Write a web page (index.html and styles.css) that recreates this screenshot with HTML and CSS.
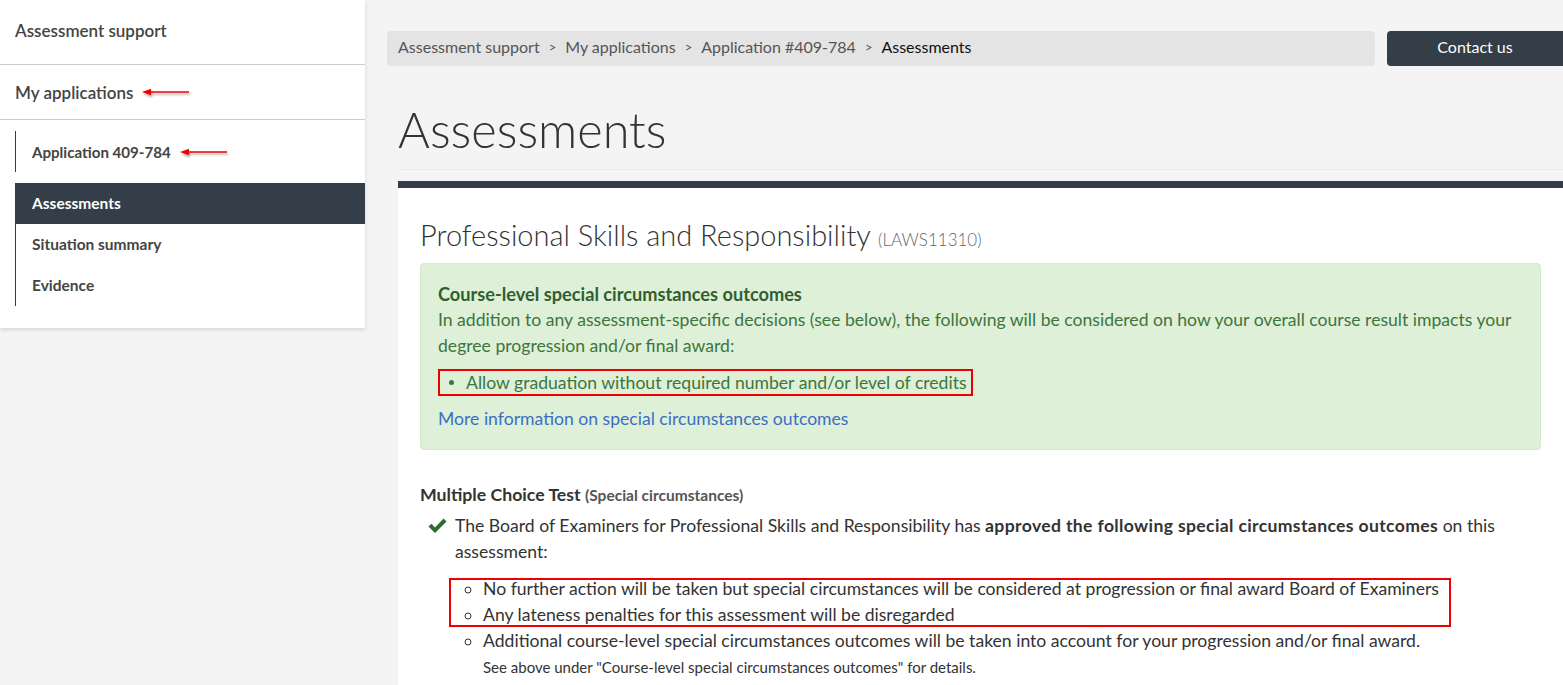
FILE: index.html
```html
<!DOCTYPE html>
<html lang="en">
<head>
<meta charset="utf-8">
<title>Assessments</title>
<link rel="stylesheet" href="styles.css">
</head>
<body>
<div class="page">
  <aside class="sidebar">
    <div class="side-top">Assessment support</div>
    <div class="side-my">
      <span>My applications</span>
      <svg class="arrow" width="50" height="8" viewBox="0 0 50 8"><path d="M8 4 H48" stroke="#e00" stroke-width="1.6"/><path d="M1 4 L10 0.8 L10 7.2 Z" fill="#e00"/></svg>
    </div>
    <div class="side-sub">
      <div class="side-app">
        <span>Application 409-784</span>
        <svg class="arrow" width="50" height="8" viewBox="0 0 50 8"><path d="M8 4 H48" stroke="#e00" stroke-width="1.6"/><path d="M1 4 L10 0.8 L10 7.2 Z" fill="#e00"/></svg>
      </div>
      <ul class="side-list">
        <li class="active">Assessments</li>
        <li>Situation summary</li>
        <li>Evidence</li>
      </ul>
    </div>
  </aside>

  <main class="main">
    <div class="topbar">
      <nav class="crumbs">
        <span>Assessment support</span><span class="sep">&gt;</span>
        <span>My applications</span><span class="sep">&gt;</span>
        <span>Application #409-784</span><span class="sep">&gt;</span>
        <span class="current">Assessments</span>
      </nav>
      <button class="contact">Contact us</button>
    </div>

    <div class="content">
      <h1 class="title">Assessments</h1>
      <section class="card">
        <h2 class="course">Professional Skills and Responsibility <small>(LAWS11310)</small></h2>
        <div class="alert">
          <div class="alert-title">Course-level special circumstances outcomes</div>
          <p>In addition to any assessment-specific decisions (see below), the following will be considered on how your overall course result impacts your degree progression and/or final award:</p>
          <ul class="dots">
            <li class="boxed">Allow graduation without required number and/or level of credits</li>
          </ul>
          <a class="more" href="#">More information on special circumstances outcomes</a>
        </div>

        <h3 class="test">Multiple Choice Test <small>(Special circumstances)</small></h3>
        <div class="decision">
          <svg class="check" width="19" height="17" viewBox="0 0 19 17"><path d="M0.5 9.6 L3.4 6.8 L7 10.4 L15.6 1.6 L18.5 4.5 L7 16 Z" fill="#2f6b2f"/></svg>
          <div class="decision-body">
            <p>The Board of Examiners for Professional Skills and Responsibility has <b>approved the following special circumstances outcomes</b> on this assessment:</p>
            <div class="outlined">
              <ul class="circles">
                <li>No further action will be taken but special circumstances will be considered at progression or final award Board of Examiners</li>
                <li>Any lateness penalties for this assessment will be disregarded</li>
              </ul>
            </div>
            <ul class="circles">
              <li>Additional course-level special circumstances outcomes will be taken into account for your progression and/or final award.<br><span class="note">See above under "Course-level special circumstances outcomes" for details.</span></li>
            </ul>
          </div>
        </div>
      </section>
    </div>
  </main>
</div>
</body>
</html>
```

FILE: styles.css
```css
* { box-sizing: border-box; }
html, body { margin: 0; padding: 0; }
body {
  background: #f4f4f4;
  font-family: Lato, "Liberation Sans", sans-serif;
  color: #333;
  height: 685px;
  overflow: hidden;
}
.page {
  display: flex;
  align-items: flex-start;
  gap: 22px;
}
.sidebar {
  width: 365px;
  flex: none;
  background: #fff;
  box-shadow: 0 2px 4px rgba(0,0,0,0.12);
  padding-bottom: 22px;
  color: #444;
}
.side-top {
  height: 65px;
  padding: 20px 15px 0;
  font-size: 17px;
  font-weight: 600;
  border-bottom: 1px solid #ccc;
}
.side-my {
  height: 55px;
  padding: 0 15px;
  display: flex;
  align-items: center;
  gap: 8px;
  font-size: 17px;
  font-weight: 600;
  border-bottom: 1px solid #ccc;
}
.arrow { filter: drop-shadow(1px 2px 1px rgba(0,0,0,0.35)); }
.side-sub { padding: 11px 0 0 15px; }
.side-app {
  height: 41px;
  border-left: 1px solid #333e48;
  padding-left: 16px;
  display: flex;
  align-items: center;
  gap: 8px;
  font-size: 15.1px;
  font-weight: 700;
  margin-bottom: 11px;
}
.side-list {
  list-style: none;
  margin: 0;
  padding: 0;
  border-left: 1px solid #333e48;
}
.side-list li {
  height: 41px;
  line-height: 41px;
  padding-left: 16px;
  font-size: 15.5px;
  font-weight: 700;
}
.side-list li.active {
  background: #333e48;
  color: #fff;
  margin-left: -1px;
  padding-left: 17px;
}
.main {
  flex: 1;
  min-width: 0;
  padding-top: 31px;
}
.topbar {
  display: flex;
  gap: 12px;
  height: 35px;
}
.crumbs {
  flex: 1;
  background: #e4e4e4;
  border-radius: 4px;
  padding: 0 11px 4px;
  display: flex;
  align-items: center;
  font-size: 16px;
  color: #555;
}
.crumbs .sep { margin: 0 9px; font-size: 13px; }
.crumbs .current { color: #111; }
.contact {
  width: 176px;
  flex: none;
  background: #333e48;
  color: #fff;
  border: 0;
  border-radius: 4px 0 0 4px;
  font-family: inherit;
  font-size: 16px;
  padding: 0 0 4px;
}
.content { padding-left: 11px; }
.title {
  margin: 0;
  padding-top: 37px;
  height: 104px;
  font-size: 48.7px;
  font-weight: 300;
  line-height: 1.1;
  color: #333;
  border-bottom: 1px solid #e9e9e9;
}
.card {
  margin-top: 11px;
  border-top: 7px solid #333e48;
  background: #fff;
  padding: 28px 22px 60px;
}
.course {
  margin: 0 0 9px;
  font-size: 29px;
  font-weight: 300;
  line-height: 1.3;
  color: #333;
}
.course small { font-size: 17px; color: #666; }
.alert {
  background: #dff0d8;
  border: 1px solid #d6e9c6;
  border-radius: 4px;
  color: #3c763d;
  padding: 17px 17px 17px;
  font-size: 17.6px;
  line-height: 26px;
}
.alert-title { font-weight: 700; font-size: 18.2px; color: #2f5f2f; }
.alert p { margin: 0 0 10px; }
.dots { margin: 0 0 10px; padding: 0; list-style: none; }
.dots li.boxed {
  display: inline-block;
  border: 2px solid #e00;
  padding: 0 4px 0 26px;
  position: relative;
  line-height: 23px;
}
.dots li.boxed::before {
  content: "";
  position: absolute;
  left: 9px; top: 9px;
  width: 5px; height: 5px;
  border-radius: 50%;
  background: #3c763d;
}
.more { color: #3b6fc4; text-decoration: none; }
.test {
  margin: 34px 0 8px;
  font-size: 17.7px;
  font-weight: 700;
  color: #333;
}
.test small { font-size: 15.5px; color: #555; }
.decision {
  display: flex;
  gap: 8px;
  padding-left: 8px;
  font-size: 17.6px;
  line-height: 26px;
}
.decision b { letter-spacing: 0.35px; }
.check { flex: none; margin-top: 4px; }
.decision-body { flex: 1; }
.decision-body p { margin: 0 0 11px; }
.outlined { position: relative; }
.outlined::after {
  content: "";
  position: absolute;
  left: -6px;
  width: 998px;
  top: 2px;
  bottom: 1px;
  border: 2px solid #e00;
}
.circles { margin: 0; padding-left: 28px; list-style: circle; }
.note { font-size: 15px; }
```
